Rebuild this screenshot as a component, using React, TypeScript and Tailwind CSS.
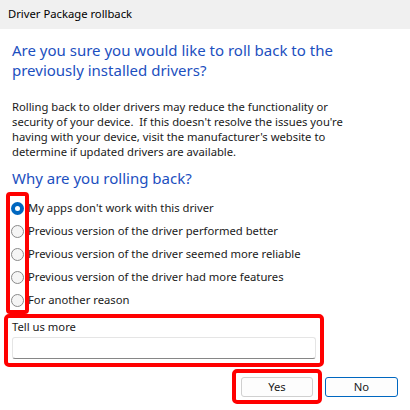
const options = [
    "My apps don't work with this driver",
    "Previous version of the driver performed better",
    "Previous version of the driver seemed more reliable",
    "Previous version of the driver had more features",
    "For another reason",
];

const Radio = ({ checked }: { checked: boolean }) => {
    if (checked) {
        return (
            <span className="flex h-[13px] w-[13px] shrink-0 items-center justify-center rounded-full bg-[#0067c0]">
                <span className="h-[5px] w-[5px] rounded-full bg-white" />
            </span>
        );
    }
    return <span className="h-[13px] w-[13px] shrink-0 rounded-full border border-[#8a8a8a] bg-[#f5f5f5]" />;
};

export default function App() {
    return (
        <div className="relative h-[410px] w-[410px] overflow-hidden bg-white text-[11.25px] text-[#1a1a1a] [font-family:'Noto_Sans',sans-serif]">
            <div className="flex h-[29px] items-center bg-[#f0f0f0] px-2 text-[11.25px] text-black">
                Driver Package rollback
            </div>

            <div className="px-3 pt-[11px]">
                <h1 className="w-[340px] text-[15px] leading-[20px] text-[#1c4fc0]">
                    Are you sure you would like to roll back to the previously installed drivers?
                </h1>
                <p className="mt-[19px] whitespace-nowrap leading-[15px]">
                    Rolling back to older drivers may reduce the functionality or
                    <br />
                    security of your device.&nbsp; If this doesn't resolve the issues you're
                    <br />
                    having with your device, visit the manufacturer's website to
                    <br />
                    determine if updated drivers are available.
                </p>
                <h2 className="mt-[9px] text-[15px] leading-[20px] text-[#1c4fc0]">Why are you rolling back?</h2>

                <div className="mt-[9px] flex flex-col">
                    {options.map((opt, i) => (
                        <label key={i} className="-ml-px flex h-[23px] items-center gap-[4px]">
                            <Radio checked={i === 0} />
                            <span>{opt}</span>
                        </label>
                    ))}
                </div>

                <div className="mt-[7px] leading-[16px]">Tell us more</div>
                <div className="mt-[2px] h-[22px] w-[304px] rounded-[3px] border border-[#e5e5e5] border-b-[#868686] bg-white" />

                <div className="mt-[18px] flex justify-end gap-3">
                    <button className="h-[20px] w-[72px] rounded-[3px] border border-[#d0d0d0] bg-[#fdfdfd] text-[11.25px]">
                        Yes
                    </button>
                    <button className="h-[20px] w-[73px] rounded-[3px] border border-[#0067c0] bg-[#fdfdfd] text-[11.25px]">
                        No
                    </button>
                </div>
            </div>

            {/* red annotation boxes */}
            <div className="absolute left-[6px] top-[192px] h-[122px] w-[23px] rounded-[4px] border-4 border-[#ff0000]" />
            <div className="absolute left-[4px] top-[314px] h-[53px] w-[320px] rounded-[5px] border-4 border-[#ff0000]" />
            <div className="absolute left-[232px] top-[369px] h-[35px] w-[90px] rounded-[5px] border-4 border-[#ff0000]" />
        </div>
    );
}
